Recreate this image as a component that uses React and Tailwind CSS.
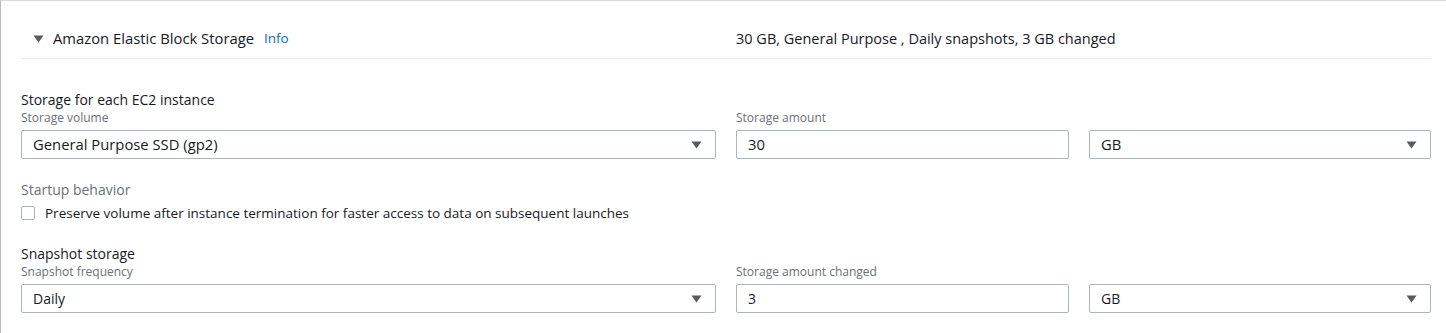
import { useState } from "react"

const Caret = () => (
    <svg width="11" height="8" viewBox="0 0 11 8" className="shrink-0">
        <path d="M0.5 0.5 L10.5 0.5 L5.5 7.5 Z" fill="#545b64" />
    </svg>
)

function SelectBox({ value, size, className }) {
    return (
        <div className={`flex items-center justify-between h-[29px] pl-[11px] pr-[13px] bg-white border border-[#aab7b8] rounded-[2px] text-[#16191f] ${size} ${className}`}>
            <span>{value}</span>
            <Caret />
        </div>
    )
}

function TextBox({ value, size, className }) {
    return (
        <div className={`flex items-center h-[29px] px-[11px] bg-white border border-[#aab7b8] rounded-[2px] text-[#16191f] ${size} ${className}`}>
            {value}
        </div>
    )
}

function FieldRow({ heading, leftLabel, leftValue, rightLabel, rightValue, size }) {
    return (
        <div>
            <p className="text-[14px] leading-[20px] text-[#16191f]">{heading}</p>
            <div className="flex gap-[20px]">
                <div className="w-[695px]">
                    <p className="text-[12px] leading-[16px] text-[#687078] mb-[4px]">{leftLabel}</p>
                    <SelectBox value={leftValue} size={size} />
                </div>
                <div className="w-[333px]">
                    <p className="text-[12px] leading-[16px] text-[#687078] mb-[4px]">{rightLabel}</p>
                    <TextBox value={rightValue} size={size} />
                </div>
                <div className="w-[342px] pt-[20px]">
                    <SelectBox value="GB" size={size} />
                </div>
            </div>
        </div>
    )
}

export default function App() {

    const [preserve, setPreserve] = useState(false)

    return (
        <div className="w-[1446px] h-[333px] bg-white border-t border-t-[#dadada] border-l border-l-[#b8bfc2] overflow-hidden" style={{ fontFamily: "'Open Sans', 'Liberation Sans', sans-serif" }}>

            {/* Header */}
            <div className="ml-[20px] mr-[15px] h-[58px] pt-[18px] flex items-center border-b border-[#eaeded]">
                <div className="w-[715px] flex items-center pl-[12px]">
                    <Caret />
                    <span className="ml-[9px] text-[14.8px] text-[#16191f]">Amazon Elastic Block Storage</span>
                    <span className="ml-[10px] text-[13.5px] text-[#0073bb]">Info</span>
                </div>
                <span className="text-[14.5px] text-[#16191f]">30 GB, General Purpose , Daily snapshots, 3 GB changed</span>
            </div>

            <div className="pl-[20px] pt-[31px]">

                <FieldRow
                    heading="Storage for each EC2 instance"
                    leftLabel="Storage volume"
                    leftValue="General Purpose SSD (gp2)"
                    rightLabel="Storage amount"
                    rightValue="30"
                    size="text-[14.8px]"
                />

                {/* Startup behavior */}
                <div className="mt-[21px]">
                    <p className="text-[14px] leading-[20px] text-[#687078]">Startup behavior</p>
                    <label className="flex items-center gap-[10px] mt-[3px] cursor-pointer">
                        <span
                            onClick={() => setPreserve(!preserve)}
                            className="w-[14px] h-[14px] border border-[#aab7b8] rounded-[2px] bg-white"
                        />
                        <span className="text-[13.5px] text-[#16191f]">Preserve volume after instance termination for faster access to data on subsequent launches</span>
                    </label>
                </div>

                <div className="mt-[21px]">
                    <FieldRow
                        heading="Snapshot storage"
                        leftLabel="Snapshot frequency"
                        leftValue="Daily"
                        rightLabel="Storage amount changed"
                        rightValue="3"
                        size="text-[14px]"
                    />
                </div>

            </div>

        </div>
    )
}
